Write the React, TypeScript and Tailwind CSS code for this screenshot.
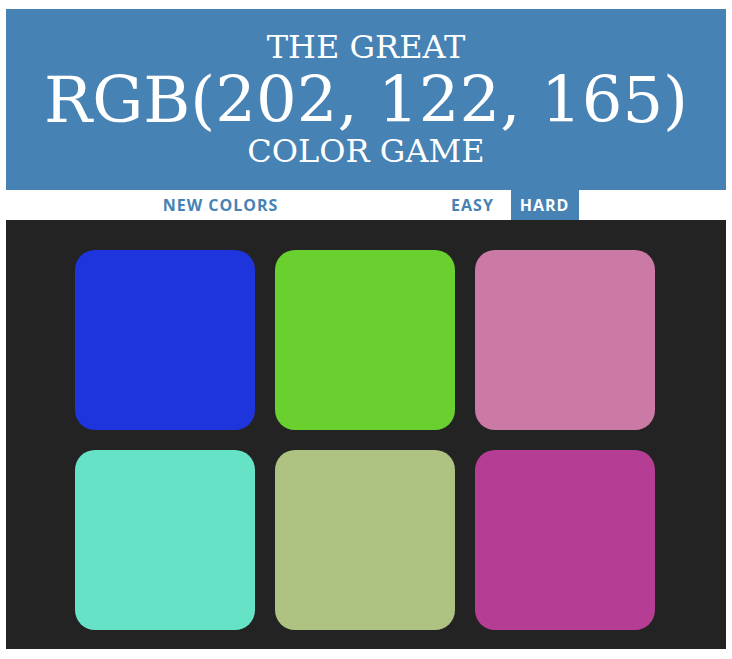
const squares = ['#1e34dc', '#6ad030', '#ca7aa5', '#66e2c6', '#aec282', '#b53d94'];

export default function App() {
  return (
    <div className="min-h-[659px] bg-white px-[6px] pt-[9px]">
      <div className="bg-[#4682b4] text-center text-white font-['DejaVu_Serif',serif] font-normal h-[181px] pt-[22px] leading-none">
        <div className="text-[32px] leading-none">THE GREAT</div>
        <div className="text-[64px] leading-none mt-[5px]">RGB(202, 122, 165)</div>
        <div className="text-[32px] leading-none mt-[3px]">COLOR GAME</div>
      </div>
      <div className="flex h-[30px] justify-center items-stretch bg-white font-['Open_Sans',sans-serif] font-bold text-[16px] tracking-[1px] text-[#4682b4]">
        <button className="w-[134px] flex items-center justify-center">NEW COLORS</button>
        <span className="w-[153px]"></span>
        <button className="w-[64px] flex items-center justify-center">EASY</button>
        <span className="w-[6px]"></span>
        <button className="w-[68px] flex items-center justify-center bg-[#4682b4] text-white">HARD</button>
      </div>
      <div className="bg-[#232323] pt-[30px] pb-[19px] pl-[69px]">
        <div className="grid grid-cols-[180px_180px_180px] gap-[20px]">
          {squares.map((c) => (
            <div key={c} className="h-[180px] rounded-[20px]" style={{ backgroundColor: c }} />
          ))}
        </div>
      </div>
    </div>
  );
}
